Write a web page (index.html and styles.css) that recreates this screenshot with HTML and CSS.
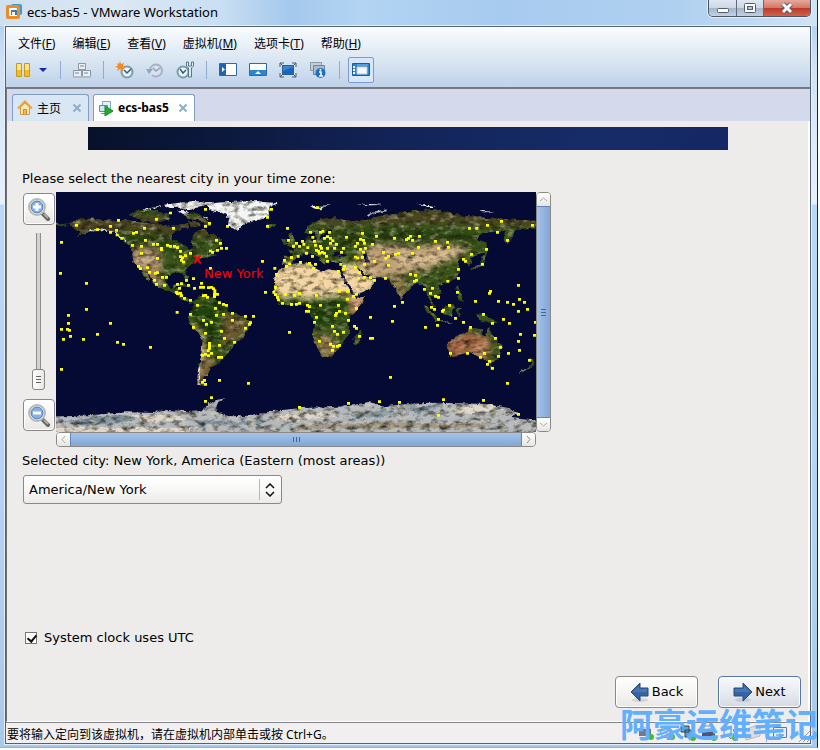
FILE: index.html
```html
<!DOCTYPE html>
<html lang="zh-CN">
<head>
<meta charset="utf-8">
<title>ecs-bas5 - VMware Workstation</title>
<link rel="stylesheet" href="styles.css">
</head>
<body>
<div class="window">
  <header class="titlebar">
    <svg class="logo" width="16" height="16" viewBox="0 0 16 16"><rect x="5" y="0" width="11" height="11" rx="2" fill="#3d9ad6"/><rect x="0" y="1" width="14" height="14" rx="2" fill="#f08a24"/><rect x="3" y="4" width="8" height="8" rx="1" fill="#fff"/><path d="M5 6h6v5H5z" fill="#2f7fc0"/><path d="M6 8h3v3H6z" fill="#f4f4f4"/></svg>
    <h1>ecs-bas5 - VMware Workstation</h1>
    <div class="controls">
      <button class="wc min" aria-label="Minimize"><svg width="14" height="12" viewBox="0 0 14 12"><rect x="1.500" y="6.500" width="11" height="4" rx="1" fill="#fff" stroke="#555c70"/></svg></button>
      <button class="wc max" aria-label="Maximize"><svg width="14" height="12" viewBox="0 0 14 12"><rect x="1.500" y="1.500" width="11" height="9" rx="1" fill="#fff" stroke="#555c70"/><rect x="4.500" y="4.500" width="5" height="3" fill="#b5c4d8" stroke="#555c70"/></svg></button>
      <button class="wc close" aria-label="Close"><svg width="14" height="12" viewBox="0 0 14 12"><path d="M3 2l8 8M11 2l-8 8" stroke="#555c70" stroke-width="5"/><path d="M3 2l8 8M11 2l-8 8" stroke="#fff" stroke-width="3"/></svg></button>
    </div>
  </header>

  <div class="app">
    <div class="top">
      <nav class="menu">
        <a href="#">文件(<u>F</u>)</a><a href="#">编辑(<u>E</u>)</a><a href="#">查看(<u>V</u>)</a><a href="#">虚拟机(<u>M</u>)</a><a href="#">选项卡(<u>T</u>)</a><a href="#">帮助(<u>H</u>)</a>
      </nav>
      <div class="toolbar">
        <button aria-label="Suspend"><svg width="16" height="16" viewBox="0 0 16 16"><path d="M1.500 1.500h5v13h-5zM9.500 1.500h5v13h-5z" fill="#ffe28a" stroke="#c79a17"/><path d="M2 8h4v6H2zM10 8h4v6h-4z" fill="#f3bd22"/></svg></button>
        <button class="drop" aria-label="Power options"><svg width="8" height="6" viewBox="0 0 8 6"><path d="M0 1h8L4 5z" fill="#1426b8"/></svg></button>
        <i class="sep"></i>
        <button aria-label="Send Ctrl+Alt+Del"><svg width="20" height="18" viewBox="0 0 20 18"><g fill="#eceff2" stroke="#8b97a4"><path d="M6.500 2.500h7v6h-7zM1.500 9.500h8v6h-8zM10.500 9.500h8v6h-8z"/></g><path d="M1 15h18v2H1zM8 4h4v2H8zM3 11h4v2H3zM12 11h4v2h-4z" fill="#b3bcc6"/></svg></button>
        <i class="sep"></i>
        <button aria-label="Take snapshot"><svg width="20" height="18" viewBox="0 0 20 18"><circle cx="12" cy="11" r="5.500" fill="#e9f6f9" stroke="#7d9bad" stroke-width="2"/><path d="M9 9l3 3 4-4" fill="none" stroke="#375f7c" stroke-width="1.500"/><path d="M5 0l1 3 3-1-1 3 3 1-3 1 0 3-3-2-3 2 1-3-3-2 3 0-1-3 2 1z" fill="#f28b20"/></svg></button>
        <button aria-label="Revert snapshot"><svg width="20" height="18" viewBox="0 0 20 18"><path d="M5 9a6 6 0 1 1 2 5" fill="#d9e1ec" stroke="#a4b3c8" stroke-width="2"/><path d="M1 8h7l-4 5z" fill="#93a5bd"/><path d="M8 7l3 3 4-3" fill="none" stroke="#8ea1b9" stroke-width="1.500"/></svg></button>
        <button aria-label="Snapshot manager"><svg width="20" height="18" viewBox="0 0 20 18"><circle cx="8" cy="11" r="5.500" fill="#e9f6f9" stroke="#7d9bad" stroke-width="2"/><path d="M5 8l3 4 3-3" fill="none" stroke="#375f7c" stroke-width="1.500"/><path d="M11.500 1v4l2 2v9h3V7l2-2V1h-2v4h-3V1z" fill="#dce9f1" stroke="#58788e"/></svg></button>
        <i class="sep"></i>
        <button aria-label="Library"><svg width="18" height="14" viewBox="0 0 18 14"><path d="M.500.500h17v12H.500z" fill="#fff" stroke="#2b6ca8"/><path d="M1 1h6v11H1z" fill="#1f64ad"/><path d="M3 4l3 2.500L3 9z" fill="#fff"/></svg></button>
        <button aria-label="Thumbnail bar"><svg width="18" height="14" viewBox="0 0 18 14"><path d="M.500.500h17v12H.500z" fill="#fff" stroke="#2b6ca8"/><path d="M1 7h16v5H1z" fill="#2b86cb"/><path d="M6 11l3-3 3 3z" fill="#fff"/></svg></button>
        <button aria-label="Full screen"><svg width="18" height="16" viewBox="0 0 18 16"><path d="M3.500 3.500h11v9h-11z" fill="#3a86d4" stroke="#26609f"/><path d="M4 9l10-4v7H4z" fill="#1d65ba"/><path d="M1 5V1h4M1 1l3 3M13 1h4v4M17 1l-3 3M1 11v4h4M1 15l3-3M13 15h4v-4M17 15l-3-3" fill="none" stroke="#4b5b6b"/></svg></button>
        <button aria-label="Unity"><svg width="18" height="18" viewBox="0 0 18 18"><path d="M1.500 1.500h11v8h-11z" fill="#c1cedb" stroke="#8b98a6"/><path d="M4.500 4.500h11v9h-11z" fill="#adbac7" stroke="#768593"/><circle cx="11.500" cy="12" r="5" fill="#1c70c4"/><path d="M10 11h2v4M10 15h4" stroke="#fff" stroke-width="1.500" fill="none"/><circle cx="11.500" cy="8.800" r="1" fill="#fff"/></svg></button>
        <i class="sep"></i>
        <button class="on" aria-label="Console view"><svg width="18" height="14" viewBox="0 0 18 14"><path d="M.500.500h17v12H.500z" fill="#2d83d0" stroke="#1b5c9f"/><path d="M5 4h10v7H5z" fill="#f5f8fb" stroke="#bdcad6"/><path d="M2 3v8" stroke="#fff" stroke-width="2" stroke-dasharray="2 1"/><path d="M5 2h11" stroke="#7ab8e8"/></svg></button>
      </div>
    </div>

    <div class="tabs">
      <div class="tab"><svg width="16" height="16" viewBox="0 0 16 16"><path d="M3.500 7v7.500h9V7L8 3z" fill="#fbe5b0" stroke="#cf9a43"/><path d="M1 8.500l7-7 7 7" fill="none" stroke="#e9a53e" stroke-width="2"/><path d="M6.500 14V9.500h3V14" fill="#f3b453" stroke="#c98e35"/></svg><span>主页</span><button aria-label="Close tab"><svg width="8" height="8" viewBox="0 0 8 8"><path d="M.500.500l7 7M7.500.500l-7 7" stroke="#8daecb" stroke-width="2"/></svg></button></div>
      <div class="tab active"><svg width="16" height="16" viewBox="0 0 16 16"><path d="M4.500 1.500h8v8h-8z" fill="#e5f1fa" stroke="#7ba6c9"/><path d="M1.500 5.500h8v6h-8z" fill="#d2e6f6" stroke="#4e8ec1"/><path d="M3 13.500h6" stroke="#4e8ec1"/><path d="M7 6l8 5-8 5z" fill="#1fae2b" stroke="#128a1e"/></svg><b>ecs-bas5</b><button aria-label="Close tab"><svg width="8" height="8" viewBox="0 0 8 8"><path d="M.500.500l7 7M7.500.500l-7 7" stroke="#8daecb" stroke-width="2"/></svg></button></div>
    </div>

    <main class="guest">
      <div class="banner"></div>
      <form class="form">
        <p class="prompt">Please select the nearest city in your time zone:</p>
        <div class="picker">
          <div class="zoom">
            <button type="button" class="gbtn zbtn" aria-label="Zoom in"><svg width="24" height="24" viewBox="0 0 24 24"><path d="M15 16l6 6" stroke="#666" stroke-width="4" stroke-linecap="round"/><path d="M17 17l4 4" stroke="#aaa" stroke-width="2"/><circle cx="10" cy="10" r="8" fill="#fff" stroke="#b5b8b7" stroke-width="2"/><circle cx="10" cy="10" r="6" fill="#86b0e2" stroke="#477bbb"/><path d="M10 6v8M6 10h8" stroke="#fff" stroke-width="3"/></svg></button>
            <input class="level" type="range" min="0" max="100" value="0" aria-label="Zoom level">
            <button type="button" class="gbtn zbtn" aria-label="Zoom out"><svg width="24" height="24" viewBox="0 0 24 24"><path d="M15 16l6 6" stroke="#666" stroke-width="4" stroke-linecap="round"/><path d="M17 17l4 4" stroke="#aaa" stroke-width="2"/><circle cx="10" cy="10" r="8" fill="#fff" stroke="#b5b8b7" stroke-width="2"/><circle cx="10" cy="10" r="6" fill="#86b0e2" stroke="#477bbb"/><path d="M6 10h8" stroke="#fff" stroke-width="3"/></svg></button>
          </div>
          <div class="mapbox">
            <svg class="map" viewBox="0 0 1440 720" role="img" aria-label="World map">
              <defs>
                <filter id="coast" filterUnits="userSpaceOnUse" x="0" y="0" width="1440" height="720" color-interpolation-filters="sRGB">
                  <feTurbulence type="fractalNoise" baseFrequency=".06" numOctaves="3" seed="4" result="n"/>
                  <feDisplacementMap in="SourceGraphic" in2="n" scale="14" xChannelSelector="R" yChannelSelector="G" result="d"/>
                  <feTurbulence type="fractalNoise" baseFrequency=".04 .07" numOctaves="4" seed="9" result="t"/>
                  <feColorMatrix in="t" values="0 0 0 0 .1  0 0 0 0 .1  0 0 0 0 .05  2 0 0 0 -.900" result="k"/>
                  <feComposite in="k" in2="d" operator="in" result="kd"/>
                  <feColorMatrix in="t" values="0 0 0 0 .9  0 0 0 0 .85  0 0 0 0 .7  0 1.400 0 0 -.700" result="w"/>
                  <feComposite in="w" in2="d" operator="in" result="wd"/>
                  <feMerge><feMergeNode in="d"/><feMergeNode in="kd"/><feMergeNode in="wd"/></feMerge>
                </filter>
                <filter id="soft" x="-20%" y="-20%" width="140%" height="140%" color-interpolation-filters="sRGB"><feGaussianBlur stdDeviation="9"/></filter>
                <clipPath id="land">
                  <path transform="translate(0 -6)" d="M40 100L70 88 110 86 160 92 200 90 225 92 260 98 300 100 340 108 370 105 395 100 400 112 370 120 350 130 345 142 352 152 375 157 390 168 400 178 410 170 406 150 412 132 430 120 450 118 456 135 474 130 490 150 500 165 495 178 470 184 450 192 470 190 480 196 450 203 425 207 413 216 400 228 388 240 396 262 394 272 386 262 378 248 345 250 332 258 330 280 345 294 362 283 362 295 378 305 382 322 405 330 414 336 400 339 380 329 360 312 340 302 305 292 290 270 268 243 280 272 272 268 250 238 243 232 232 212 228 188 224 173 205 157 185 137 160 122 125 122 95 130 60 142 78 126 50 115zM412 335L430 320 445 314 475 324 490 340 510 350 525 368 560 380 585 394 585 405 570 425 560 445 535 462 525 480 505 500 492 510 485 522 465 530 455 552 443 570 446 586 425 580 420 560 430 530 437 490 440 450 430 430 412 415 398 390 402 365 412 350z"/>
                  <path transform="translate(0 -6)" d="M218 74l22-14 30-4 30 8 38 10 2 14-40 10-36-4-26-12zM385 72l38-2 36 24 6 14-20-4-16-14-34-4zM396 92l24 4 14 12-28 2zM358 284l28-1 20 9-16-1zM424 292l22 1-12 5zM628 104l30-3 6 6-22 8zM0 98l34 6-10 6-24-4z"/>
                  <path transform="translate(702 -6)" d="M-47 258L-30 240 5 222 40 218 65 222 75 235 95 242 120 238 150 245 155 262 175 295 190 318 200 324 222 320 215 340 190 370 175 395 178 425 165 445 155 465 130 495 95 502 85 480 68 440 75 410 70 385 55 365 50 345 20 340-10 346-35 340-45 315-48 290zM213 418l2 20-12 28-10-3 2-24zM-17 200L5 200 8 190-5 184 15 175 40 160 50 150 55 132 65 150 90 148 106 140 126 124 112 120 96 134 84 148 74 138 80 122 60 128 42 126 60 105 100 86 140 82 170 95 230 90 260 80 340 68 420 58 470 68 520 78 600 85 680 90 738 92 738 112 700 115 670 122 670 140 652 162 640 150 648 125 620 125 580 130 560 148 590 158 590 185 560 195 540 205 545 225 533 222 520 205 500 210 512 240 500 265 470 278 445 285 455 310 437 326 425 312 425 335 440 357 425 345 410 305 395 280 370 285 345 310 336 332 320 300 305 275 290 265 250 265 220 248 205 228 225 258 255 270 255 280 235 300 195 318 185 300 165 265 155 245 160 222 150 215 110 215 105 224 90 200 108 222 96 216 80 198 60 187 45 192 25 196 10 215-5 224-20 222z"/>
                  <path transform="translate(702 -6)" d="M472 462L500 437 530 425 545 413 578 418 575 430 587 440 595 413 615 445 635 475 625 505 605 524 590 515 570 500 540 486 500 496 480 498 475 478zM716 502l22 16-22 20-4-4 12-14zM714 536l-24 16-4-4 18-14zM598 526l12 2-6 10zM592 178l-2 16-12 32-36 14-4-4 32-14 12-26zM398 344l16 8 34 36-10 4-30-30zM444 390l54 10-52-4zM460 352l30-10 4 10-10 26-22-4zM500 358l18-4-12 8 4 18-6 2zM558 372l22 2 24 10 20 16-22-2-32-8zM498 290l10-4 4 26 6 22-10 0zM-8 168l6-22-4-12 12-4 12 28 4 12-12 4zM-24 150l14-4 0 16-12 2zM332 322l6 8-6 4zM464 266l6 6-4 12z"/>
                </clipPath>
              </defs>
              <path fill="#050a34" d="M0 0h1440v720H0z"/>
              <g filter="url(#coast)">
                <g clip-path="url(#land)">
                  <path fill="#3a551a" d="M0 0h1440v720H0z"/>
                  <g filter="url(#soft)">
                    <path fill="#4c4322" d="M30 75h470v60l-130 0-120-20-210 15zM740 60h700v45l-280-12-380 5z"/>
                    <path fill="#28430f" d="M180 120l140 10 120 40-20 20-220-30zM790 120l200-10 250 10 40 40-260-5-230 20z"/>
                    <path fill="#a98662" d="M226 165l70 0 25 30-10 50 15 30-25 0-75-60z"/>
                    <path fill="#cdb393" d="M245 185l30-5 20 25-10 20-30-10z"/>
                    <path fill="#1e4509" d="M402 340l80-20 70 60-60 70-70-30-24-50zM700 320h170l20 40-40 40h-70l-60-50z"/>
                    <path fill="#6f5b30" d="M500 360l80 20-10 40-40 30-30 10zM440 500l50 0-30 90-50-10z"/>
                    <path fill="#c8a07b" d="M395 380l40 40 14 60-14 70-20 0 15-80z"/>
                    <path fill="#f6d7a3" d="M640 215l130-5 80 20 20 40 16 36-50 12-90 2-70-4-50-5zM854 214l50 6 60 40-20 40-60 20-40-60z"/>
                    <path fill="#c1a177" d="M900 210l20-40 80-18 60 12 80-10 100 12-30 30-110 40-60 10-80 16z"/>
                    <path fill="#e4c99c" d="M1020 192l90 2 60-15 40-10-30 30-80 18-70 0z"/>
                    <path fill="#947d4c" d="M993 265l50-14 10 60-20 20zM765 430l60-5 20 50-40 35z"/>
                    <path fill="#d49a78" d="M880 320l50-10-20 60-30-10z"/>
                    <path fill="#39541b" d="M840 375l50-5-20 100-20 20z"/>
                    <path fill="#a56342" d="M1170 430l110-15 50 60-50 35-60-20-50 15z"/>
                    <path fill="#d7a078" d="M1255 455l35 5-5 30-28-5z"/>
                    <path fill="#44591f" d="M1225 405l80 0 10 30-60-8zM1315 430l30 40-40 50-16-20z"/>
                  </g>
                  <path fill="none" stroke="#dfe5e9" stroke-width="5" d="M100 115l40-4 40 15 30 22M437 465l-6 40-4 60 8 10"/>
                </g>
                <g fill="#050a34" transform="translate(702 -6)">
                  <path d="M126 194l18-10 28 12-4 6-36 0zM214 188l14-4 6 18 2 18-10 0-6-16zM150 248l6-2 36 60 8 12-6 2-14-16zM202 234l10 4 14 22-6 2z"/>
                </g>
                <g fill="#f4f7f8" transform="translate(0 -6)">
                  <path d="M446 42L500 37 550 35 600 33 665 40 640 53 642 78 610 90 570 100 555 112 545 123 530 118 516 100 520 85 505 72 490 65 462 58z"/>
                  <path d="M322 44l50-6 40-5 60 4-20 10-30 6-20 9-30-8-30 0zM252 62l34-8-6 6zM286 50l30-2-20 8zM440 82l14-4 6 10zM366 62l24 2 12 10-22-2z"/>
                  <path d="M762 48l68-2-26 4-8 8-16-2zM900 44l40-2 40 2-36 2zM1087 43l20 0 36 8-24 0zM1268 63l52 2-40 2z"/>
                </g>
                <path fill="none" stroke="#b8c4c8" stroke-width="5" d="M935 72l16-11 42-6"/>
                <path fill="#4a4b27" d="M1065 58l70-5 38 8-40 8z"/>
                <path fill="#b5b9bd" d="M-20 674l80-2 60-4 90-7 90 2 10-10 80 4 50-2 20-18 18-12 30-6-24 16-6 24 40 14 70-2 60-14 90-9 80-2 60-4 60-12 50 12 70-6 60-4 100 2 70 2 60 10 40 18-24 14 80 8V740H-20z"/>
                <path fill="#8295a6" d="M0 690l80-8 110-14 60 12-60 14-100 6zM420 684l140 6 90-10-40 18-180 0zM880 668l90-14 60 10-60 10-70 4zM1060 646l100-8-30 20-50 8z"/>
                <path fill="#e0d8cc" d="M220 672l100-4 80 14-120 10zM640 672l160-10 60 10-180 16zM1180 650l110-14 60 16-130 14zM0 708h400v12H0z"/>
                <path fill="#a39886" d="M720 702l280-12 180 6 150-4-60 14-550 6z"/>
              </g>
              <g fill="none" stroke="#ff0" stroke-width="8" stroke-linecap="square">
                <path transform="translate(0 -6)" d="M16 157h1M61 106h1M124 119h1M163 109h1M187 91h1M181 121h1M183 135h1M163 127h1M197 145h1M232 130h1M241 127h1M265 115h1M301 88h1M343 69h1M352 115h1M268 151h1M229 166h1M256 169h1M256 190h1M292 163h1M304 163h1M316 175h1M316 179h1M334 166h1M343 169h1M355 169h1M364 173h1M373 184h1M304 205h1M247 229h1M253 236h1M274 233h1M280 247h1M298 250h1M304 248h1M319 262h1M331 262h1M295 271h1M301 283h1M325 286h1M373 200h1M379 203h1M376 211h1M382 216h1M388 197h1M403 190h1M463 183h1M469 187h1M484 181h1M496 175h1M511 175h1M493 160h1M481 151h1M448 109h1M460 100h1M514 109h1M448 58h1M646 58h1M634 82h1M634 109h1M694 115h1M697 151h1M463 235h1M391 271h1M412 266h1M364 283h1M376 281h1M370 295h1M361 307h1M364 311h1M373 310h1M376 317h1M385 325h1M403 331h1M397 286h1M415 295h1M433 292h1M442 292h1M436 280h1M457 293h1M466 292h1M472 296h1M476 302h1M476 308h1M484 313h1M475 314h1M475 320h1M442 317h1M454 322h1M448 316h1M424 346h1M403 373h1M412 412h1M442 391h1M451 403h1M466 397h1M448 430h1M481 376h1M478 355h1M502 373h1M490 338h1M502 343h1M511 346h1M529 370h1M529 391h1M568 379h1M592 379h1M583 398h1M580 403h1M568 415h1M535 457h1M505 445h1M496 424h1M490 466h1M460 460h1M460 467h1M460 475h1M456 482h1M466 490h1M448 493h1M439 496h1M457 497h1M487 502h1M496 502h1M445 571h1M439 577h1M448 583h1M490 571h1M577 580h1M466 623h1M448 634h1M363 367h1M283 472h1M202 463h1M184 457h1M163 400h1M124 433h1M82 448h1M43 439h1M40 421h1M34 418h1M37 400h1M37 376h1M16 418h1M22 448h1M16 538h1M91 358h1M91 280h1M13 250h1M619 214h1M628 307h1M700 427h1M656 235h1M661 253h1M658 292h1M653 307h1M658 314h1M664 322h1M667 330h1M679 340h1M688 313h1M706 343h1M685 211h1M691 229h1M700 222h1M706 202h1M712 169h1"/>
                <path transform="translate(702 -6)" d="M82 53h1M61 127h1M91 127h1M98 124h1M118 127h1M103 145h1M112 140h1M121 145h1M128 152h1M73 154h1M68 142h1M37 154h1M19 160h1M10 168h1M28 169h1M41 163h1M53 173h1M49 190h1M76 166h1M79 181h1M91 169h1M94 175h1M85 184h1M88 190h1M97 187h1M103 190h1M109 199h1M112 214h1M112 175h1M121 160h1M139 163h1M133 175h1M160 175h1M154 187h1M169 142h1M217 130h1M211 148h1M202 160h1M196 169h1M211 178h1M220 151h1M223 160h1M226 175h1M220 187h1M196 201h1M202 204h1M217 202h1M223 223h1M247 163h1M259 139h1M253 214h1M280 187h1M287 205h1M295 199h1M295 226h1M316 193h1M325 190h1M367 190h1M385 172h1M388 139h1M355 145h1M349 149h1M361 139h1M367 151h1M313 145h1M436 154h1M445 175h1M472 157h1M475 172h1M538 115h1M560 115h1M592 106h1M634 94h1M622 127h1M652 151h1M727 106h1M589 178h1M577 223h1M544 193h1M520 208h1M526 214h1M505 238h1M505 265h1M473 274h1M502 307h1M361 253h1M376 256h1M379 271h1M373 274h1M286 265h1M253 271h1M241 263h1M223 262h1M205 265h1M208 248h1M196 232h1M163 229h1M160 238h1M152 223h1M145 244h1M31 217h1M58 220h1M76 223h1M70 235h1M24 199h1M4 203h1M67 199h1M148 304h1M172 304h1M172 328h1M190 319h1M199 313h1M199 355h1M145 346h1M148 364h1M139 370h1M136 376h1M166 370h1M175 391h1M193 409h1M199 415h1M208 439h1M127 409h1M133 424h1M142 433h1M160 427h1M88 454h1M121 463h1M130 469h1M142 469h1M148 466h1M127 481h1M73 397h1M79 382h1M49 364h1M55 364h1M52 346h1M58 350h1M91 346h1M79 316h1M28 310h1M13 316h1M19 343h1M28 340h1M4 343h1M241 382h1M241 445h1M247 445h1M307 394h1M313 349h1M337 337h1M406 412h1M403 298h1M427 295h1M421 310h1M436 319h1M445 322h1M424 352h1M433 358h1M457 364h1M460 360h1M478 346h1M445 388h1M442 406h1M496 385h1M520 397h1M541 412h1M556 334h1M598 310h1M601 304h1M580 373h1M607 400h1M625 334h1M640 388h1M652 337h1M658 400h1M670 343h1M685 286h1M688 328h1M703 337h1M712 358h1M685 364h1M736 397h1M733 436h1M691 433h1M685 454h1M688 481h1M655 490h1M631 472h1M616 445h1M583 490h1M571 502h1M532 490h1M481 490h1M598 514h1M592 523h1M607 535h1M625 499h1M718 511h1M652 580h1M301 562h1M268 635h1M328 637h1M175 640h1M28 652h1M460 629h1M580 631h1M445 676h1M685 673h1"/>
              </g>
              <path d="M414 190l20 24M434 190l-20 24" stroke="red" stroke-width="6" fill="none"/>
              <text class="city" x="444" y="257">New York</text>
            </svg>
            <div class="vbar"><button type="button" aria-label="Scroll up"><svg width="9" height="9" viewBox="0 0 9 9"><path d="M1 6l3.500-3L8 6" fill="none" stroke="#aaa"/></svg></button><i class="thumb"><i class="grip"></i></i><button type="button" aria-label="Scroll down"><svg width="9" height="9" viewBox="0 0 9 9"><path d="M1 3l3.500 3L8 3" fill="none" stroke="#aaa"/></svg></button></div>
            <div class="hbar"><button type="button" aria-label="Scroll left"><svg width="9" height="9" viewBox="0 0 9 9"><path d="M6 1L3 4.500 6 8" fill="none" stroke="#aaa"/></svg></button><i class="thumb"><i class="grip"></i></i><button type="button" aria-label="Scroll right"><svg width="9" height="9" viewBox="0 0 9 9"><path d="M3 1l3 3.500L3 8" fill="none" stroke="#888"/></svg></button></div>
          </div>
        </div>
        <p class="selected">Selected city: New York, America (Eastern (most areas))</p>
        <div class="combo">
          <select aria-label="Time zone"><option>America/New York</option></select>
          <svg class="arrows" width="10" height="14" viewBox="0 0 10 14"><path d="M1 5l4-4 4 4M1 9l4 4 4-4" fill="none" stroke="#111" stroke-width="1.500"/></svg>
        </div>
        <label class="utc"><input type="checkbox" checked><span>System clock uses UTC</span></label>
        <div class="actions">
          <button type="button" class="gbtn"><svg width="20" height="20" viewBox="0 0 20 20"><ellipse cx="10" cy="18" rx="8" ry="2" fill="#d5d5d5"/><path d="M1 10l9-9v5h8v8h-8v5z" fill="#3465a4" stroke="#274c7c"/><path d="M3 10l6-6v3h8v3z" fill="#4a77b2"/></svg>Back</button>
          <button type="button" class="gbtn next"><svg width="20" height="20" viewBox="0 0 20 20"><ellipse cx="10" cy="18" rx="8" ry="2" fill="#c3cad5"/><path d="M19 10l-9-9v5H1v8h9v5z" fill="#3465a4" stroke="#274c7c"/><path d="M17 10l-6-6v3H2v3z" fill="#4a77b2"/></svg>Next</button>
        </div>
      </form>
    </main>

    <footer class="status">
      <span>要将输入定向到该虚拟机，请在虚拟机内部单击或按 Ctrl+G。</span>
      <div class="devices">
        <svg width="16" height="16" viewBox="0 0 16 16"><path d="M1 4h12v7H1z" fill="#778"/><path d="M1 4l2-2h9l1 2z" fill="#ccd"/><circle cx="13" cy="12" r="3" fill="#3fbf2e"/></svg>
        <svg width="16" height="16" viewBox="0 0 16 16"><circle cx="7" cy="7" r="5.500" fill="#dde4ea" stroke="#8a959f"/><circle cx="7" cy="7" r="1.500" fill="#8a959f"/><circle cx="13" cy="12" r="3" fill="#3fbf2e"/></svg>
        <svg width="16" height="16" viewBox="0 0 16 16"><path d="M1 1h8v6H1zM5 5h8v7H5z" fill="#5aa5dc" stroke="#345"/><circle cx="13" cy="13" r="3" fill="#3fbf2e"/></svg>
        <svg width="16" height="16" viewBox="0 0 16 16"><path d="M1 5h13v7H1z" fill="#556"/><path d="M3 1h8v4H3z" fill="#eee" stroke="#889"/><circle cx="13" cy="13" r="3" fill="#3fbf2e"/></svg>
        <svg width="16" height="16" viewBox="0 0 16 16"><path d="M2 5h3l4-4v13L5 10H2z" fill="#e4ecf5" stroke="#5a87b8"/><path d="M11 4q3 4 0 7" fill="none" stroke="#3578b8"/><circle cx="13" cy="13" r="3" fill="#3fbf2e"/></svg>
        <svg width="18" height="16" viewBox="0 0 18 16"><path d="M1 5l11-4 5 1v9L3 15z" fill="#ddd" stroke="#bbb"/></svg>
        <i class="dsep"></i>
        <svg class="msg" width="16" height="16" viewBox="0 0 16 16"><path d="M1.500 2.500h13v10h-13z" fill="#e8eef8" stroke="#557ab5"/><path d="M4 10h8" stroke="#557ab5"/></svg>
        <svg class="resize" width="12" height="12" viewBox="0 0 12 12"><path d="M1 12L12 1M5 12l7-7M9 12l3-3" stroke="#999"/></svg>
      </div>
    </footer>
  </div>
  <div class="watermark">阿豪运维笔记</div>
</div>
</body>
</html>
```
FILE: styles.css
```css
* { box-sizing: border-box; }
body {
  margin: 0;
  background: #fff;
  color: #000;
  font: 12px/16px "Noto Sans", "Noto Sans CJK SC", sans-serif;
}
button { font: inherit; color: inherit; padding: 0; border: 0; background: none; display: flex; align-items: center; justify-content: center; }
svg { display: block; flex: none; }
p { margin: 0; }

.window {
  position: relative;
  display: flex;
  flex-direction: column;
  min-height: calc(100vh - 2px);
  margin-right: 2px;
  padding: 0 6px 3px 5px;
  border-right: 1px solid #1b2530;
  border-bottom: 1px solid #8fb2d6;
  background: linear-gradient(#a9ccee 0, #b6d2ef 26px, #cfe2f5 60px, #e6f1fc 204px, #b7d8f8 205px, #b3d4f6 480px, #a9c9e9);
}

.titlebar {
  display: flex;
  align-items: flex-start;
  height: 26px;
  margin: 0 -6px 0 -5px;
  padding: 0 6px;
  background: linear-gradient(90deg, #cfe0f0 0, #dce8f3 120px, #c9dff3 220px, #a4c8ec 290px, #b3d4f3 360px, #a7cbef 500px, #b0d0f0 680px, #d0e3f6);
}
.logo { margin-top: 4px; }
.titlebar h1 { margin: 4px 0 0 5px; font-size: 13px; line-height: 16px; font-weight: 400; flex: 1; }
.controls { display: flex; border: 1px solid #4c5664; border-top: 0; border-radius: 0 0 5px 5px; overflow: hidden; box-shadow: 0 0 0 1px #e2edf8; }
.wc { width: 27px; height: 16px; background: linear-gradient(#dfe8f1, #cbd7e4 50%, #a5b6ca 51%, #c2d2e2); border-right: 1px solid #5d6b7c; }
.wc.min { width: 28px; }
.wc.close { width: 46px; border-right: 0; background: linear-gradient(#e6a89c, #d37868 48%, #b93a24 50%, #d4614a); }

.app { flex: 1; display: flex; flex-direction: column; border: 1px solid #55626f; box-shadow: 0 0 0 1px #e4effa; background: #f0eeee; }
.top { height: 62px; padding: 9px 12px 0; border-bottom: 2px solid #78797f; background: linear-gradient(#fafcff, #dde8f3 50%, #bfd2ea); }
.menu { display: flex; gap: 17px; }
.menu a { color: #000; text-decoration: none; }
.toolbar { display: flex; align-items: center; height: 26px; margin: 5px 0 0 -4px; }
.toolbar button { width: 30px; height: 26px; }
.toolbar button:first-child { width: 18px; }
.toolbar .drop { width: 22px; }
.toolbar .sep { width: 1px; height: 18px; margin: 0 6px; background: #8fadd0; }
.toolbar .on { width: 26px; border: 1px solid #7a9ccc; border-radius: 2px; background: #d7e6f8; margin-left: 2px; }

.tabs { display: flex; align-items: flex-end; gap: 4px; height: 32px; padding-left: 5px; background: #d4d9ec; border-left: 1px solid #78797f; }
.tab { display: flex; align-items: center; height: 27px; gap: 4px; padding: 0 7px 0 4px; border: 1px solid #7d9fc2; border-bottom: 0; border-radius: 3px 3px 0 0; background: #d9e6f4; }
.tab button { margin-left: 8px; width: 8px; height: 16px; }
.tab.active { background: #fff; }
.tab b { font-size: 12px; }
.tab span { font-family: "Noto Sans CJK SC", sans-serif; }
.tab.active button { margin-left: 6px; }

.guest {
  flex: 1;
  display: flex;
  flex-direction: column;
  padding: 6px 7px 13px 15px;
  border-left: 1px solid #6e7175;
  border-right: 2px solid #fff;
  border-bottom: 1px solid #fff;
  background: #edeceb;
  font: 13px/16px "DejaVu Sans", sans-serif;
}
.banner { height: 23px; margin: 0 73px 0 66px; background: linear-gradient(100deg, #07112a, #132459 50%, #162c69 80%, #152764); }
.form { flex: 1; display: flex; flex-direction: column; }
.prompt { margin: 21px 0 5px; }
.picker { display: flex; max-width: 529px; }
.zoom { display: flex; flex-direction: column; align-items: center; width: 34px; height: 240px; padding: 1px 1px 1px 0; }
.gbtn { border: 1px solid #8b8985; border-radius: 4px; background: linear-gradient(#fff, #f6f5f4 50%, #e8e7e5); box-shadow: inset 0 0 0 1px #fff; }
.zbtn { width: 32px; height: 32px; }
.level {
  appearance: none;
  writing-mode: vertical-lr;
  direction: rtl;
  width: 13px;
  flex: 1;
  min-height: 0;
  margin: 8px 0 9px;
  background: linear-gradient(90deg, transparent 4px, #8f8e8c 4px, #8f8e8c 5px, #d3d2d0 5px, #d3d2d0 8px, #8f8e8c 8px, #8f8e8c 9px, transparent 9px);
}
.level::-webkit-slider-thumb {
  appearance: none;
  width: 13px;
  height: 21px;
  border: 1px solid #888682;
  border-radius: 3px;
  background: repeating-linear-gradient(#666 0 1px, transparent 1px 3px) center / 5px 7px no-repeat, linear-gradient(90deg, #fff, #e8e7e6);
}

.mapbox { flex: 1; display: grid; grid-template-columns: 1fr 15px; grid-template-rows: auto 15px; }
.map { width: 100%; height: auto; }
.city { font: 39px "DejaVu Sans", sans-serif; fill: #f00; }
.vbar, .hbar { display: flex; border-radius: 4px; border: 1px solid #8b8985; overflow: hidden; background: #f3f2f1; }
.vbar { flex-direction: column; }
.vbar button, .hbar button { width: 13px; height: 13px; background: linear-gradient(#fff, #e6e5e3); }
.thumb { flex: 1; display: flex; align-items: center; justify-content: center; border: 0 solid #5f86b8; }
.vbar .thumb { border-width: 1px 0; background: linear-gradient(90deg, #a5c3ea, #82a6d5); }
.hbar .thumb { border-width: 0 1px; background: linear-gradient(#a5c3ea, #82a6d5); }
.vbar .grip { width: 5px; height: 7px; background: repeating-linear-gradient(#3f659b 0 1px, transparent 1px 3px); }
.hbar .grip { width: 7px; height: 5px; background: repeating-linear-gradient(90deg, #3f659b 0 1px, transparent 1px 3px); }

.selected { margin: 6px 0; }
.combo { position: relative; width: 259px; margin-left: 1px; }
.combo select { appearance: none; width: 100%; height: 29px; padding: 0 30px 0 5px; border: 1px solid #8b8985; border-radius: 3px; font: inherit; color: #000; background: linear-gradient(#b9b7b4, #b9b7b4) right 21px center / 1px 21px no-repeat, linear-gradient(#fff, #f8f8f7 50%, #ebeae8); }
.arrows { position: absolute; right: 7px; top: 8px; pointer-events: none; }
.utc { display: flex; align-items: center; gap: 7px; margin: 126px 0 0 3px; align-self: flex-start; }
.utc input { appearance: none; width: 12px; height: 12px; margin: 0; border: 1px solid #777; background: #fff; }
.utc input:checked::before { content: ""; display: block; width: 4px; height: 7px; margin: 0 0 0 3px; border: solid #111; border-width: 0 2px 2px 0; transform: rotate(40deg); }
.actions { display: flex; justify-content: flex-end; gap: 20px; margin-top: auto; }
.actions .gbtn { width: 83px; height: 32px; gap: 2px; border-radius: 4px; }
.actions .gbtn.next { border-color: #5479aa; background: linear-gradient(#f7f9fc, #e8ebf1 50%, #d5dae3); }

.status { display: flex; align-items: center; justify-content: space-between; height: 21px; padding-left: 1px; border-top: 1px solid #85868a; background: #f1efef; }
.status > span { padding-top: 3px; }
.devices { display: flex; align-items: center; gap: 5px; }
.dsep { width: 1px; height: 18px; background: #aaa; }
.msg { margin-right: 5px; }
.resize { align-self: flex-end; }
.watermark { position: absolute; right: -1px; bottom: 7px; font: 700 33px/34px "Noto Sans CJK SC", sans-serif; color: #62b0fd; white-space: nowrap; }
```
